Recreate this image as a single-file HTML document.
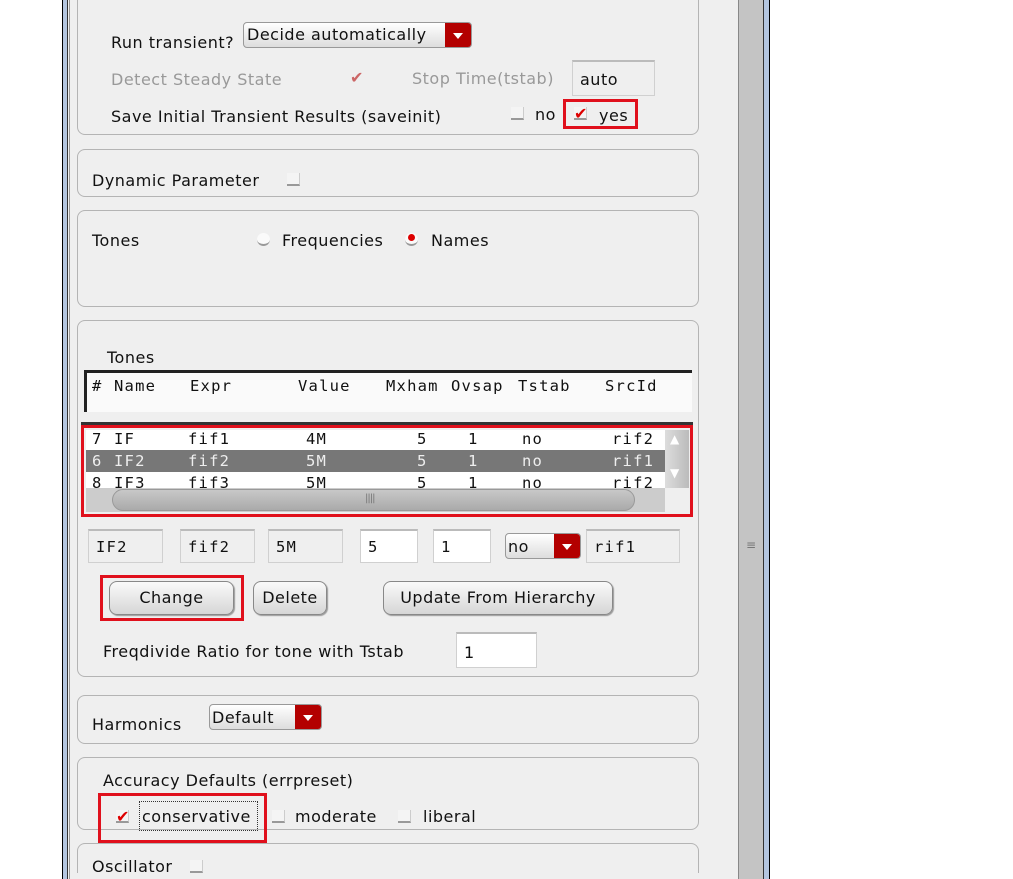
<!DOCTYPE html>
<html style="overflow:hidden;width:1013px;height:879px"><head><meta charset="utf-8"><style>
*{box-sizing:border-box;margin:0;padding:0}
body{width:1013px;height:879px;background:#fff;position:relative;overflow:hidden;font-family:"DejaVu Sans","Liberation Sans",sans-serif;font-size:16px;letter-spacing:0.5px;color:#111}
.a{position:absolute}
.win{left:62px;top:0;width:708px;height:879px;background:#efefef;border-left:1px solid #000;border-right:1px solid #000}
.grp{position:absolute;left:77px;width:622px;border:1px solid #b4b4b4;border-radius:8px}
.t{position:absolute;white-space:nowrap}
.mono{font-family:"DejaVu Sans Mono","Liberation Mono",monospace;font-size:15.5px;letter-spacing:1.2px}
.row span{position:absolute;white-space:nowrap;font-family:"DejaVu Sans Mono","Liberation Mono",monospace;font-size:15.5px;letter-spacing:1.2px}
.cb{position:absolute;width:13px;height:13px;border-bottom:2px solid #999;border-right:1px solid #ccc;background:#f4f4f4}
.chk{position:absolute;color:#d00;font-size:16px;font-weight:bold;line-height:13px}
.dd{position:absolute;border:1px solid #999;border-radius:4px;background:linear-gradient(#fff,#ddd);height:26px}
.dd .ar{position:absolute;right:0;top:0;bottom:0;width:26px;background:#b30000;border-radius:0 3px 3px 0}
.dd .ar:after{content:"";position:absolute;left:8px;top:10px;border-left:5px solid transparent;border-right:5px solid transparent;border-top:6px solid #fff}
.fld{position:absolute;border:1px solid #d0d0d0;border-top:2px solid #bbb;background:#efefef;height:34px;padding:6px 0 0 7px}
.fld.w{background:#fff}
.btn{position:absolute;border:1px solid #888;border-radius:8px;background:linear-gradient(#fafafa,#d6d6d6);height:34px;text-align:center;line-height:32px;box-shadow:1px 1px 1px #999}
.red{position:absolute;border:3px solid #e0101c}
</style></head><body>
<div class="a win"></div>
<div class="a" style="left:63px;top:0;width:4px;height:879px;background:#b4c6e0"></div>
<div class="a" style="left:67px;top:0;width:1px;height:879px;background:#333"></div>
<div class="a" style="left:69px;top:0;width:1px;height:879px;background:#999"></div>
<div class="a" style="left:738px;top:0;width:1px;height:879px;background:#888"></div>
<div class="a" style="left:739px;top:0;width:24px;height:879px;background:#c4c4c4"></div>
<div class="a" style="left:763px;top:0;width:1px;height:879px;background:#333"></div>
<div class="a" style="left:764px;top:0;width:5px;height:879px;background:#b4c6e0"></div>
<div class="t" style="left:746px;top:543px;color:#777;font-size:12px;line-height:4px">≡</div>

<div class="grp" style="top:-10px;height:145px"></div>
<div class="t" style="left:111px;top:33px">Run transient?</div>
<div class="dd" style="left:243px;top:22px;width:229px"><span class="t" style="left:3px;top:2px">Decide automatically</span><div class="ar"></div></div>
<div class="t" style="left:111px;top:70px;color:#999">Detect Steady State</div>
<div class="chk" style="left:350px;top:71px;color:#c66">✔</div>
<div class="t" style="left:412px;top:69px;color:#999">Stop Time(tstab)</div>
<div class="fld" style="left:572px;top:60px;width:83px;height:36px;padding-top:8px">auto</div>
<div class="t" style="left:111px;top:107px">Save Initial Transient Results (saveinit)</div>
<div class="cb" style="left:511px;top:107px"></div>
<div class="t" style="left:535px;top:105px">no</div>
<div class="red" style="left:563px;top:99px;width:75px;height:30px"></div>
<div class="cb" style="left:574px;top:107px"></div><div class="chk" style="left:574px;top:107px">✔</div>
<div class="t" style="left:599px;top:106px">yes</div>

<div class="grp" style="top:149px;height:48px"></div>
<div class="t" style="left:92px;top:171px">Dynamic Parameter</div>
<div class="cb" style="left:287px;top:173px"></div>

<div class="grp" style="top:210px;height:97px"></div>
<div class="t" style="left:92px;top:231px">Tones</div>
<div class="a" style="left:257px;top:233px;width:13px;height:13px;border-radius:50%;background:#fafafa;border-bottom:2px solid #999"></div>
<div class="t" style="left:282px;top:231px">Frequencies</div>
<div class="a" style="left:405px;top:233px;width:13px;height:13px;border-radius:50%;background:#fafafa;border-bottom:2px solid #999"></div>
<div class="a" style="left:408px;top:234px;width:7px;height:7px;border-radius:50%;background:#d00"></div>
<div class="t" style="left:431px;top:231px">Names</div>

<div class="grp" style="top:320px;height:357px"></div>
<div class="t" style="left:107px;top:348px">Tones</div>
<div class="a" style="left:84px;top:370px;width:608px;height:42px;background:#fafafa;border-top:3px solid #222;border-left:3px solid #222"></div>
<div class="a row" style="left:0;top:377px">
<span style="left:92px">#</span><span style="left:114px">Name</span><span style="left:190px">Expr</span><span style="left:298px">Value</span><span style="left:386px">Mxham</span><span style="left:451px">Ovsap</span><span style="left:518px">Tstab</span><span style="left:605px">SrcId</span></div>
<div class="a" style="left:81px;top:422px;width:612px;height:3px;background:#333"></div>
<div class="a" style="left:86px;top:430px;width:579px;height:58px;background:#fff;overflow:hidden">
 <div class="a" style="left:0;top:20px;width:579px;height:22px;background:#777"></div>
 <div class="a row" style="left:-86px;top:0px"><span style="left:92px">7</span><span style="left:114px">IF</span><span style="left:188px">fif1</span><span style="left:306px">4M</span><span style="left:417px">5</span><span style="left:468px">1</span><span style="left:522px">no</span><span style="left:612px">rif2</span></div>
 <div class="a row" style="left:-86px;top:22px;color:#eee"><span style="left:92px">6</span><span style="left:114px">IF2</span><span style="left:188px">fif2</span><span style="left:306px">5M</span><span style="left:417px">5</span><span style="left:468px">1</span><span style="left:522px">no</span><span style="left:612px">rif1</span></div>
 <div class="a row" style="left:-86px;top:44px"><span style="left:92px">8</span><span style="left:114px">IF3</span><span style="left:188px">fif3</span><span style="left:306px">5M</span><span style="left:417px">5</span><span style="left:468px">1</span><span style="left:522px">no</span><span style="left:612px">rif2</span></div>
</div>
<div class="a" style="left:665px;top:430px;width:24px;height:58px;background:linear-gradient(90deg,#ddd,#bbb)"></div>
<div class="t" style="left:670px;top:432px;color:#fff;font-size:12px">▲</div>
<div class="t" style="left:670px;top:466px;color:#fff;font-size:12px">▼</div>
<div class="a" style="left:86px;top:488px;width:579px;height:24px;background:#ccc"></div>
<div class="a" style="left:112px;top:489px;width:523px;height:22px;border-radius:11px;background:linear-gradient(#c8c8c8,#aaa);border:1px solid #999"></div>
<div class="t" style="left:365px;top:493px;color:#777;font-size:10px;letter-spacing:-1px">||||</div>
<div class="red" style="left:81px;top:425px;width:612px;height:92px"></div>

<div class="fld" style="left:88px;top:529px;width:75px"><span class="mono">IF2</span></div>
<div class="fld" style="left:180px;top:529px;width:75px"><span class="mono">fif2</span></div>
<div class="fld" style="left:268px;top:529px;width:75px"><span class="mono">5M</span></div>
<div class="fld w" style="left:360px;top:529px;width:58px"><span class="mono">5</span></div>
<div class="fld w" style="left:433px;top:529px;width:58px"><span class="mono">1</span></div>
<div class="dd" style="left:505px;top:533px;width:76px"><span class="t" style="left:2px;top:3px">no</span><div class="ar"></div></div>
<div class="fld" style="left:586px;top:529px;width:94px"><span class="mono">rif1</span></div>

<div class="btn" style="left:109px;top:581px;width:125px">Change</div>
<div class="red" style="left:100px;top:575px;width:144px;height:46px"></div>
<div class="btn" style="left:253px;top:581px;width:74px">Delete</div>
<div class="btn" style="left:383px;top:581px;width:230px">Update From Hierarchy</div>

<div class="t" style="left:103px;top:642px">Freqdivide Ratio for tone with Tstab</div>
<div class="fld w" style="left:456px;top:632px;width:81px;height:36px;padding-top:9px">1</div>

<div class="grp" style="top:695px;height:49px"></div>
<div class="t" style="left:92px;top:715px">Harmonics</div>
<div class="dd" style="left:209px;top:704px;width:113px"><span class="t" style="left:2px;top:3px">Default</span><div class="ar"></div></div>

<div class="grp" style="top:757px;height:73px"></div>
<div class="t" style="left:103px;top:771px">Accuracy Defaults (errpreset)</div>
<div class="cb" style="left:116px;top:810px"></div><div class="chk" style="left:116px;top:810px">✔</div>
<div class="a" style="left:139px;top:801px;width:119px;height:30px;border:1px dotted #333"></div>
<div class="t" style="left:142px;top:807px">conservative</div>
<div class="cb" style="left:272px;top:810px"></div>
<div class="t" style="left:295px;top:807px">moderate</div>
<div class="cb" style="left:398px;top:810px"></div>
<div class="t" style="left:423px;top:807px">liberal</div>
<div class="red" style="left:98px;top:793px;width:169px;height:50px"></div>

<div class="grp" style="top:843px;height:30px;border-bottom:none;border-radius:8px 8px 0 0"></div>
<div class="t" style="left:92px;top:857px">Oscillator</div>
<div class="cb" style="left:190px;top:860px"></div>
</body></html>
